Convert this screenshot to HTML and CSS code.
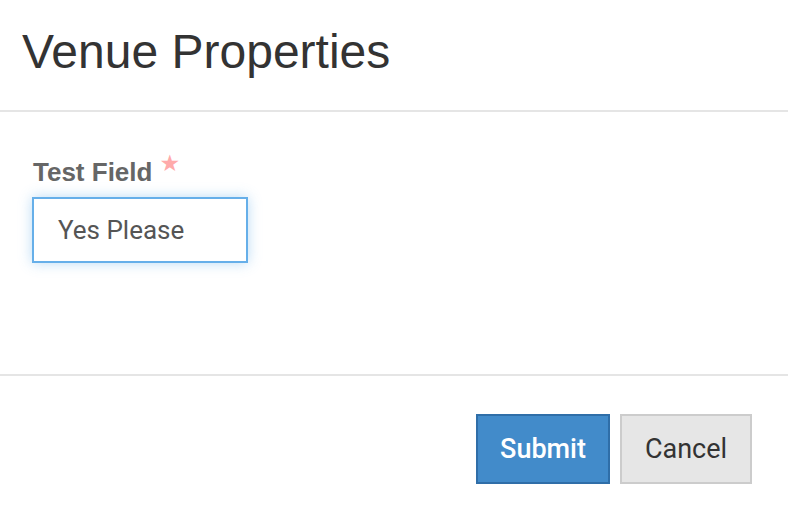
FILE: index.html
```html
<!DOCTYPE html>
<html>
<head>
<meta charset="utf-8">
<link rel="stylesheet" href="styles.css">
</head>
<body>
<div class="modal">
  <div class="modal-header">
    <h1 class="title">Venue Properties</h1>
  </div>
  <div class="modal-body">
    <label class="label">Test Field <span class="star">★</span></label>
    <div class="input">Yes Please</div>
  </div>
  <div class="modal-footer">
    <button class="btn btn-primary">Submit</button>
    <button class="btn btn-default">Cancel</button>
  </div>
</div>
</body>
</html>
```
FILE: styles.css
```css
html, body {
  margin: 0;
  padding: 0;
  background: #fff;
}
.modal {
  width: 788px;
  height: 510px;
  display: flex;
  flex-direction: column;
}
.modal-header {
  height: 112px;
  box-sizing: border-box;
  border-bottom: 2px solid #e5e5e5;
  padding: 24px 22px 0;
}
.title {
  margin: 0;
  font-family: "Liberation Sans", Arial, sans-serif;
  font-weight: normal;
  font-size: 48px;
  line-height: 56px;
  color: #333;
}
.modal-body {
  height: 262px;
  box-sizing: border-box;
  padding: 42px 32px 0;
  display: flex;
  flex-direction: column;
  align-items: flex-start;
}
.label {
  font-family: "Liberation Sans", Arial, sans-serif;
  font-weight: bold;
  font-size: 26px;
  line-height: 36px;
  color: #666;
  padding-left: 1px;
  display: flex;
  align-items: flex-start;
}
.star {
  color: #ffaaaa;
  font-family: "DejaVu Sans", sans-serif;
  font-size: 23px;
  line-height: 20px;
  margin-left: 7px;
  margin-top: -1px;
}
.input {
  margin-top: 7px;
  width: 216px;
  height: 66px;
  box-sizing: border-box;
  border: 2px solid #66afe9;
  box-shadow: 0 0 12px rgba(102, 175, 233, 0.45);
  font-family: Roboto, "Liberation Sans", sans-serif;
  font-size: 26px;
  line-height: 62px;
  color: #555;
  padding-left: 24px;
}
.modal-footer {
  border-top: 2px solid #e5e5e5;
  flex: 1;
  display: flex;
  justify-content: flex-end;
  align-items: flex-start;
  gap: 10px;
  padding: 38px 36px 0 0;
}
.btn {
  margin: 0;
  height: 70px;
  box-sizing: border-box;
  font-family: Roboto, "Liberation Sans", sans-serif;
  font-size: 27px;
  border-radius: 0;
  cursor: pointer;
}
.btn-primary {
  width: 134px;
  background: #428bca;
  border: 2px solid #2f6ea8;
  color: #fff;
  font-weight: 500;
}
.btn-default {
  width: 132px;
  background: #e6e6e6;
  border: 2px solid #cccccc;
  color: #333;
}
```
